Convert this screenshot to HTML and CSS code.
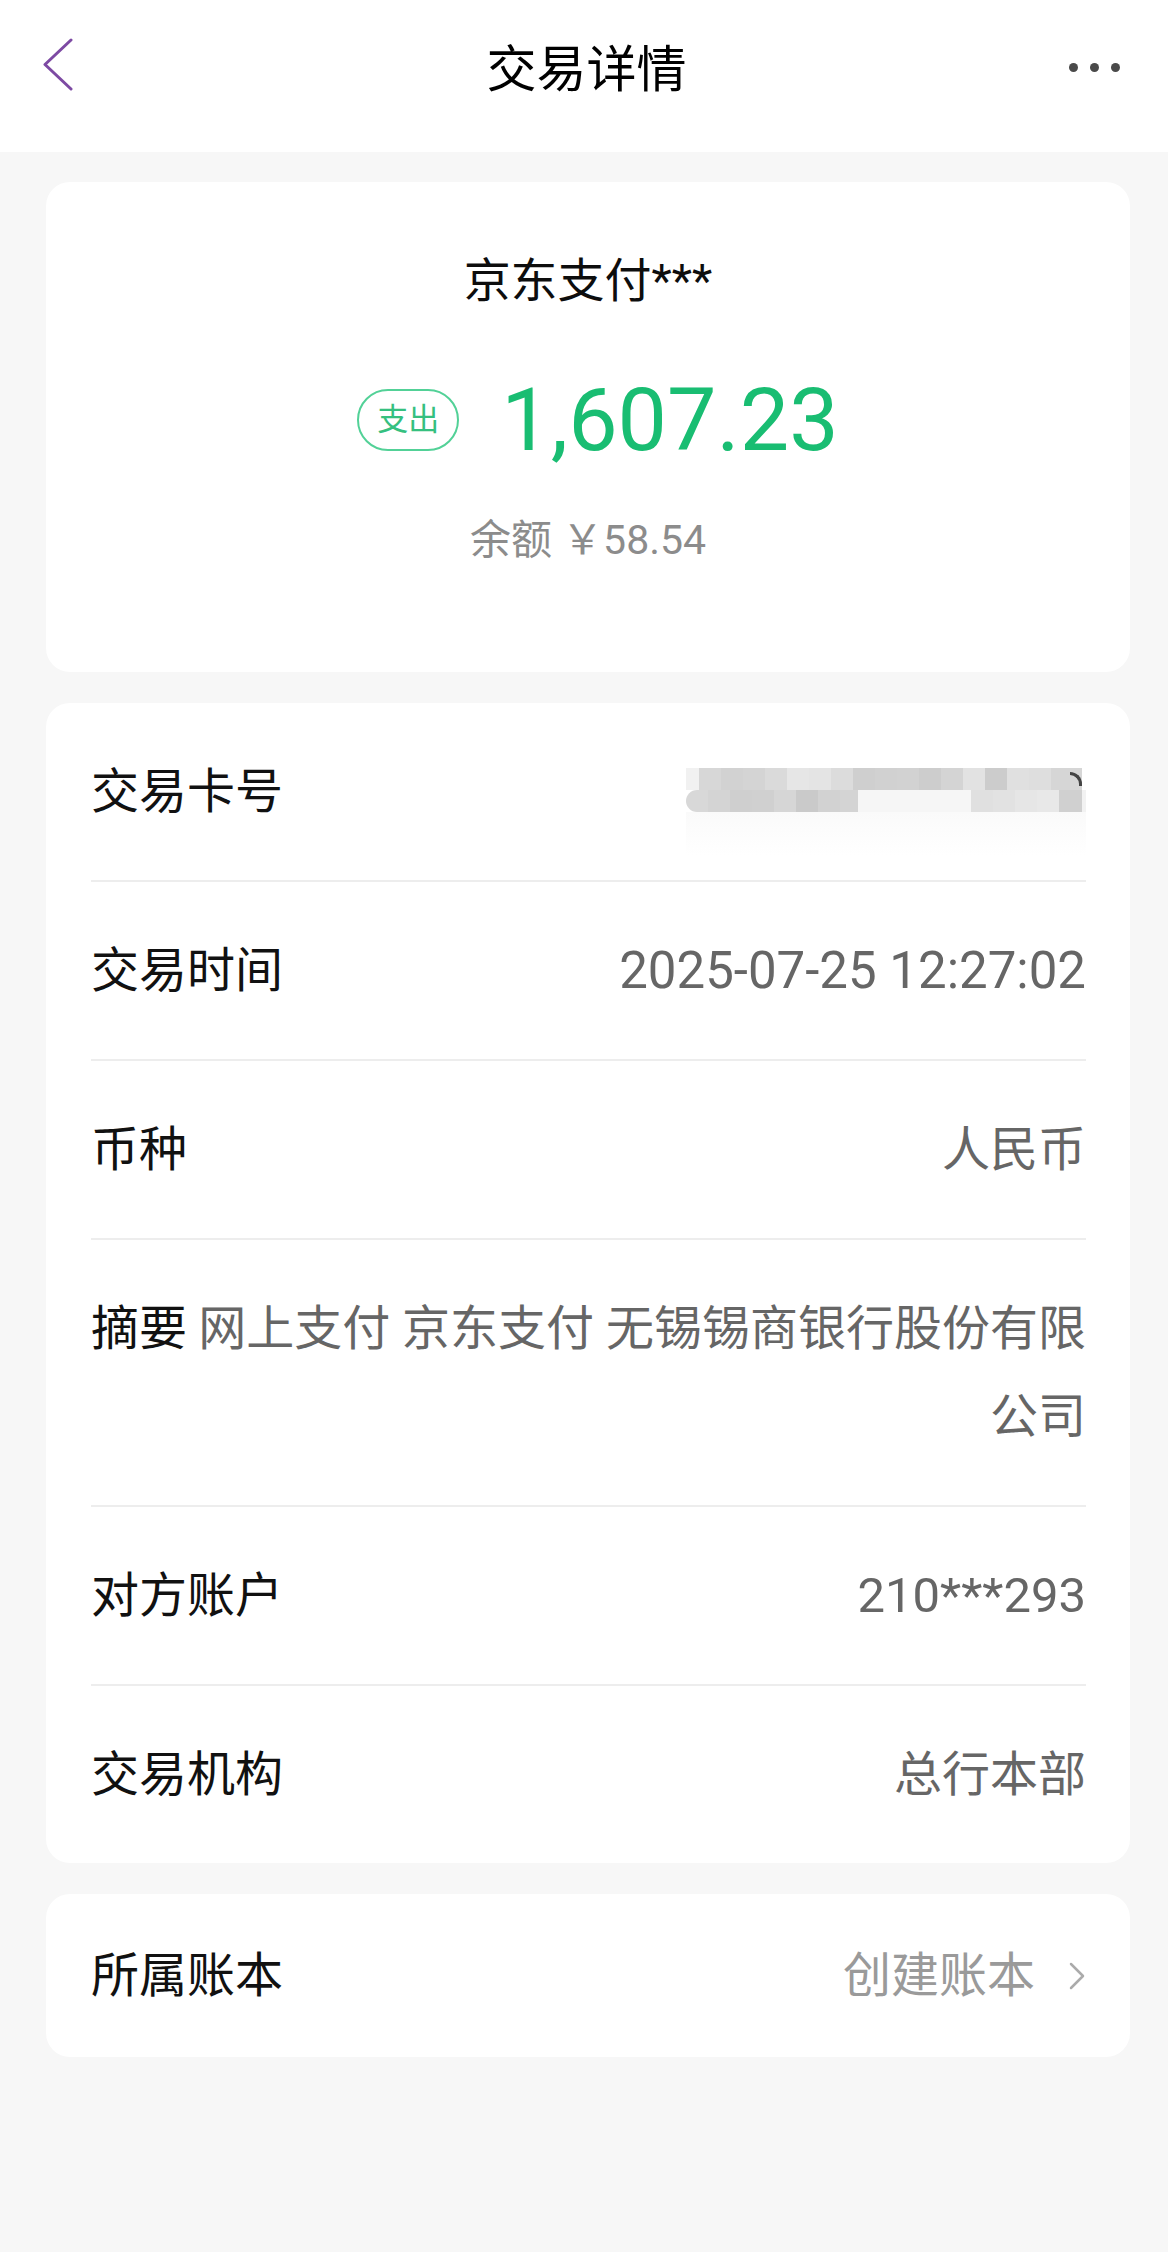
FILE: index.html
```html
<!DOCTYPE html>
<html lang="zh-CN">
<head>
    <meta charset="UTF-8">
    <meta name="viewport" content="width=device-width, initial-scale=1.0">
    <title>交易详情</title>
    <link rel="stylesheet" href="styles.css">
</head>
<body>
    <!-- Top Bar -->
    <header class="topbar">
        <div class="back">
            <svg width="32" height="54" viewBox="0 0 32 54">
                <polyline points="29,2 3,26.5 29,51" fill="none" stroke="#7d4aa3" stroke-width="3" stroke-linecap="round" stroke-linejoin="round"/>
            </svg>
        </div>
        <h1>交易详情</h1>
        <div class="more">
            <span></span><span></span><span></span>
        </div>
    </header>

    <div class="page">
        <!-- Amount Summary -->
        <div class="card summary">
            <div class="payee">京东支付***</div>
            <div class="amount-row">
                <span class="tag">支出</span>
                <span class="amount">1,607.23</span>
            </div>
            <div class="balance">余额 ￥58.54</div>
        </div>

        <!-- Detail Rows -->
        <div class="card details">
            <div class="row">
                <span class="label">交易卡号</span>
                <div class="value masked">
                    <div class="mosaic">
                        <div class="mosaic-line line-a"></div>
                        <div class="mosaic-line line-b"></div>
                        <div class="mosaic-line line-c"></div>
                        <span class="mosaic-edge"></span>
                    </div>
                </div>
            </div>
            <div class="row">
                <span class="label">交易时间</span>
                <span class="value num">2025-07-25 12:27:02</span>
            </div>
            <div class="row">
                <span class="label">币种</span>
                <span class="value">人民币</span>
            </div>
            <div class="row">
                <span class="label">摘要</span>
                <span class="value desc">网上支付 京东支付 无锡锡商银行股份有限公司</span>
            </div>
            <div class="row">
                <span class="label">对方账户</span>
                <span class="value acct">210***293</span>
            </div>
            <div class="row">
                <span class="label">交易机构</span>
                <span class="value">总行本部</span>
            </div>
        </div>

        <!-- Ledger -->
        <div class="card ledger">
            <div class="row">
                <span class="label">所属账本</span>
                <span class="link">
                    创建账本
                    <svg width="18" height="28" viewBox="0 0 18 28">
                        <polyline points="3,2 15,14 3,26" fill="none" stroke="#ababab" stroke-width="2.5" stroke-linecap="round" stroke-linejoin="round"/>
                    </svg>
                </span>
            </div>
        </div>
    </div>
</body>
</html>
```

FILE: styles.css
```css
/* General Reset */
* {
    margin: 0;
    padding: 0;
    box-sizing: border-box;
}

body {
    font-family: Roboto, "Noto Sans CJK SC", sans-serif;
    background-color: #f7f7f7;
    color: #111;
    min-height: 2252px;
}

/* Top Bar */
.topbar {
    display: grid;
    grid-template-columns: 1fr auto 1fr;
    align-items: center;
    height: 152px;
    padding: 0 37px 22px 42px;
    background-color: #fff;
}

.back svg {
    display: block;
}

.topbar h1 {
    font-family: "Noto Sans CJK SC", sans-serif;
    font-size: 50px;
    font-weight: 400;
    color: #000;
    line-height: 64px;
}

.more {
    display: flex;
    justify-content: flex-end;
    gap: 12px;
    margin-right: 11px;
    padding-top: 4px;
}

.more span {
    width: 9px;
    height: 9px;
    border-radius: 50%;
    background-color: #4a4a4a;
}

/* Page */
.page {
    display: flex;
    flex-direction: column;
    gap: 31px;
    padding: 30px 38px 0 46px;
}

.card {
    background-color: #fff;
    border-radius: 24px;
}

/* Summary Card */
.summary {
    padding: 67px 0 104px;
    text-align: center;
}

.payee {
    font-size: 47px;
    line-height: 64px;
    color: #0d0d0d;
}

.amount-row {
    display: flex;
    justify-content: center;
    align-items: center;
    gap: 42px;
    height: 100px;
    margin-top: 57px;
    padding-left: 20px;
}

.tag {
    width: 102px;
    height: 62px;
    border: 2.5px solid #52d197;
    border-radius: 31px;
    font-size: 31px;
    line-height: 57px;
    color: #35c07f;
}

.amount {
    font-size: 88px;
    line-height: 100px;
    font-weight: 400;
    color: #19bd72;
}

.balance {
    margin-top: 42px;
    font-size: 41px;
    line-height: 56px;
    color: #8c8c8c;
}

/* Detail Rows */
.details,
.ledger {
    padding: 0 44px 0 45px;
}

.row {
    display: flex;
    justify-content: space-between;
    align-items: flex-start;
    gap: 4px;
    padding: 44.5px 0;
    font-size: 48px;
    line-height: 88px;
    border-bottom: 2px solid #ededed;
}

.row:last-child {
    border-bottom: none;
}

.label {
    flex-shrink: 0;
    color: #111;
}

.value {
    text-align: right;
    color: #666;
}

.value.num {
    font-size: 51px;
}

.value.acct {
    font-size: 49px;
}

.desc {
    flex: 1;
}

/* Masked card number */
.masked {
    height: 88px;
    display: flex;
    align-items: center;
    padding-top: 40px;
}

.mosaic {
    position: relative;
    width: 400px;
}

.mosaic-line {
    height: 22px;
}

.line-a {
    background: linear-gradient(to right,
        #f1f1f1 0 13px, #d7d7d7 13px 35px, #d2d2d2 35px 57px, #d4d4d4 57px 79px,
        #dadada 79px 101px, #e6e6e6 101px 123px, #e4e4e4 123px 145px, #dcdcdc 145px 167px,
        #cfcfcf 167px 189px, #d1d1d1 189px 211px, #d2d2d2 211px 233px, #cdcdcd 233px 255px,
        #d4d4d4 255px 277px, #e2e2e2 277px 299px, #cccccc 299px 321px, #e0e0e0 321px 343px,
        #dedede 343px 365px, #d6d6d6 365px 396px, #fff 396px);
}

.line-b {
    border-radius: 11px 0 0 11px;
    background: linear-gradient(to right,
        #d8d8d8 0 22px, #d4d4d4 22px 44px, #cfcfcf 44px 66px, #d0d0d0 66px 88px,
        #d6d6d6 88px 110px, #cacaca 110px 132px, #d2d2d2 132px 154px, #d4d4d4 154px 172px,
        #f6f6f6 172px 285px, #e0e0e0 285px 307px, #e2e2e2 307px 329px, #e6e6e6 329px 351px,
        #e8e8e8 351px 373px, #d0d0d0 373px 396px, #f2f2f2 396px);
}

.line-c {
    height: 44px;
    background: linear-gradient(to bottom, #fafafa, #fff);
}

.mosaic-edge {
    position: absolute;
    top: 4px;
    left: 384px;
    width: 12px;
    height: 14px;
    border-top: 3px solid #444;
    border-right: 3px solid #444;
    border-top-right-radius: 12px;
}

/* Ledger */
.ledger .row {
    padding: 37.5px 0;
    align-items: center;
}

.link {
    display: flex;
    align-items: center;
    gap: 33px;
    color: #9a9a9a;
}

.link svg {
    display: block;
}
```
